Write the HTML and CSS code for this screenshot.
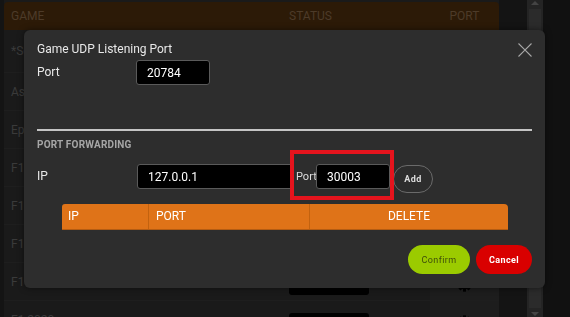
FILE: index.html
```html
<!DOCTYPE html>
<html lang="en">
<head>
  <meta charset="UTF-8">
  <title>Game Ports</title>
  <link rel="stylesheet" href="styles.css">
</head>
<body>

  <div class="app">
    <div class="games">
      <div class="games-head">
        <span class="col-name">GAME</span>
        <span class="col-status">STATUS</span>
        <span class="col-port">PORT</span>
      </div>
      <div class="game-row first"><span class="col-name">*Select</span><span class="col-status"></span><span class="col-port"></span></div>
      <div class="game-row"><span class="col-name">Asseto</span><span class="col-status"><i class="badge"></i></span><span class="col-port"><svg class="gear" viewBox="-8 -8 16 16"><g fill="#000"><circle r="5.4"/><rect x="-1.6" y="-7.6" width="3.2" height="15.2"/><rect x="-1.6" y="-7.6" width="3.2" height="15.2" transform="rotate(45)"/><rect x="-1.6" y="-7.6" width="3.2" height="15.2" transform="rotate(90)"/><rect x="-1.6" y="-7.6" width="3.2" height="15.2" transform="rotate(135)"/></g><circle r="2.2" fill="#1d1d1d"/></svg></span></div>
      <div class="game-row"><span class="col-name">Epic</span><span class="col-status"><i class="badge"></i></span><span class="col-port"><svg class="gear" viewBox="-8 -8 16 16"><g fill="#000"><circle r="5.4"/><rect x="-1.6" y="-7.6" width="3.2" height="15.2"/><rect x="-1.6" y="-7.6" width="3.2" height="15.2" transform="rotate(45)"/><rect x="-1.6" y="-7.6" width="3.2" height="15.2" transform="rotate(90)"/><rect x="-1.6" y="-7.6" width="3.2" height="15.2" transform="rotate(135)"/></g><circle r="2.2" fill="#1d1d1d"/></svg></span></div>
      <div class="game-row"><span class="col-name">F1</span><span class="col-status"><i class="badge"></i></span><span class="col-port"><svg class="gear" viewBox="-8 -8 16 16"><g fill="#000"><circle r="5.4"/><rect x="-1.6" y="-7.6" width="3.2" height="15.2"/><rect x="-1.6" y="-7.6" width="3.2" height="15.2" transform="rotate(45)"/><rect x="-1.6" y="-7.6" width="3.2" height="15.2" transform="rotate(90)"/><rect x="-1.6" y="-7.6" width="3.2" height="15.2" transform="rotate(135)"/></g><circle r="2.2" fill="#1d1d1d"/></svg></span></div>
      <div class="game-row"><span class="col-name">F1</span><span class="col-status"><i class="badge"></i></span><span class="col-port"><svg class="gear" viewBox="-8 -8 16 16"><g fill="#000"><circle r="5.4"/><rect x="-1.6" y="-7.6" width="3.2" height="15.2"/><rect x="-1.6" y="-7.6" width="3.2" height="15.2" transform="rotate(45)"/><rect x="-1.6" y="-7.6" width="3.2" height="15.2" transform="rotate(90)"/><rect x="-1.6" y="-7.6" width="3.2" height="15.2" transform="rotate(135)"/></g><circle r="2.2" fill="#1d1d1d"/></svg></span></div>
      <div class="game-row"><span class="col-name">F1</span><span class="col-status"><i class="badge"></i></span><span class="col-port"><svg class="gear" viewBox="-8 -8 16 16"><g fill="#000"><circle r="5.4"/><rect x="-1.6" y="-7.6" width="3.2" height="15.2"/><rect x="-1.6" y="-7.6" width="3.2" height="15.2" transform="rotate(45)"/><rect x="-1.6" y="-7.6" width="3.2" height="15.2" transform="rotate(90)"/><rect x="-1.6" y="-7.6" width="3.2" height="15.2" transform="rotate(135)"/></g><circle r="2.2" fill="#1d1d1d"/></svg></span></div>
      <div class="game-row"><span class="col-name">F1</span><span class="col-status"><i class="badge">Instructions</i></span><span class="col-port"><svg class="gear" viewBox="-8 -8 16 16"><g fill="#000"><circle r="5.4"/><rect x="-1.6" y="-7.6" width="3.2" height="15.2"/><rect x="-1.6" y="-7.6" width="3.2" height="15.2" transform="rotate(45)"/><rect x="-1.6" y="-7.6" width="3.2" height="15.2" transform="rotate(90)"/><rect x="-1.6" y="-7.6" width="3.2" height="15.2" transform="rotate(135)"/></g><circle r="2.2" fill="#1d1d1d"/></svg></span></div>
      <div class="game-row"><span class="col-name">F1 2020</span><span class="col-status"><i class="badge"></i></span><span class="col-port"><svg class="gear" viewBox="-8 -8 16 16"><g fill="#000"><circle r="5.4"/><rect x="-1.6" y="-7.6" width="3.2" height="15.2"/><rect x="-1.6" y="-7.6" width="3.2" height="15.2" transform="rotate(45)"/><rect x="-1.6" y="-7.6" width="3.2" height="15.2" transform="rotate(90)"/><rect x="-1.6" y="-7.6" width="3.2" height="15.2" transform="rotate(135)"/></g><circle r="2.2" fill="#1d1d1d"/></svg></span></div>
    </div>
    <div class="scrollbar">
      <span class="arrow up"></span>
      <span class="thumb"></span>
      <span class="arrow down"></span>
    </div>
    <div class="side"></div>
  </div>

  <!-- Port settings modal -->
  <div class="modal">
    <button class="close" type="button">
      <svg width="14" height="14" viewBox="0 0 14 14"><path d="M0.5 0.5L13.5 13.5M13.5 0.5L0.5 13.5" stroke="#a8a8a8" stroke-width="1.1" fill="none"/></svg>
    </button>

    <h3 class="modal-title">Game UDP Listening Port</h3>
    <div class="field-row">
      <label class="field-label">Port</label>
      <input class="field short" type="text" value="20784">
    </div>

    <hr class="divider">

    <h4 class="section-title">PORT FORWARDING</h4>
    <div class="field-row fwd">
      <label class="field-label">IP</label>
      <input class="field wide" type="text" value="127.0.0.1">
      <label class="inline-label">Port</label>
      <input class="field short" type="text" value="30003">
      <button class="add-btn" type="button">Add</button>
    </div>

    <div class="fwd-table">
      <div class="fwd-ip">IP</div>
      <div class="fwd-port">PORT</div>
      <div class="fwd-del">DELETE</div>
    </div>

    <div class="actions">
      <button class="btn confirm" type="button">Confirm</button>
      <button class="btn cancel" type="button">Cancel</button>
    </div>

    <div class="highlight"></div>
  </div>

</body>
</html>
```

FILE: styles.css
```css
body {
  margin: 0;
  background: #141414;
  font-family: Roboto, "Liberation Sans", sans-serif;
  overflow: hidden;
}

.app {
  display: flex;
  height: 317px;
  overflow: hidden;
}

.games {
  width: 495px;
  margin-left: 4px;
  background: #1a1a1a;
  overflow: hidden;
}

.games-head {
  display: flex;
  align-items: center;
  height: 28px;
  margin-top: 2px;
  background: #2c1a07;
  border-radius: 4px 4px 0 0;
  color: #4d3b29;
  font-size: 12px;
}

.col-name {
  width: 278px;
  padding-left: 7px;
  white-space: nowrap;
}

.col-status {
  width: 141px;
}

.col-port {
  width: 69px;
  display: flex;
  align-items: center;
  justify-content: center;
  align-self: stretch;
}

.game-row {
  display: flex;
  align-items: center;
  height: 37px;
  border-bottom: 1px solid #1e1e1e;
  color: #3a3a3a;
  font-size: 12px;
}

.game-row.first {
  height: 42px;
}

.game-row .col-port {
  background: #1d1d1d;
}

.badge {
  display: block;
  width: 80px;
  height: 20px;
  margin-top: 6px;
  border-radius: 3px;
  background: #000;
  color: #262626;
  font-style: normal;
  font-size: 9px;
  text-align: center;
  line-height: 12px;
}

.gear {
  width: 15px;
  height: 15px;
  margin-top: 6px;
}

.scrollbar {
  width: 16px;
  margin-left: 28px;
  background: #242424;
  display: flex;
  flex-direction: column;
  align-items: center;
  justify-content: space-between;
}

.arrow {
  width: 0;
  height: 0;
  border-left: 4px solid transparent;
  border-right: 4px solid transparent;
}

.arrow.up {
  border-bottom: 4px solid #444;
  margin-top: 1px;
}

.arrow.down {
  border-top: 4px solid #444;
  margin-bottom: 1px;
}

.thumb {
  flex: 1;
  width: 12px;
  margin: 4px 0;
  background: #2b2b2b;
}

.side {
  flex: 1;
  background: #111;
}

/* modal */

.modal {
  position: fixed;
  left: 24px;
  top: 30px;
  width: 521px;
  height: 258px;
  box-sizing: border-box;
  padding: 12px 13px 0;
  background: #2d2d2d;
  border-radius: 6px;
  box-shadow: 0 0 6px rgba(0,0,0,0.5);
  color: #e8e8e8;
}

.close {
  position: absolute;
  right: 13px;
  top: 13px;
  padding: 0;
  border: none;
  background: none;
  line-height: 0;
  cursor: pointer;
}

.modal-title {
  margin: 0;
  font-size: 12px;
  font-weight: normal;
  line-height: 14px;
}

.field-row {
  display: flex;
  align-items: center;
  margin-top: 4px;
}

.field-label {
  width: 99px;
  font-size: 12px;
  line-height: 25px;
}

.field {
  height: 25px;
  box-sizing: border-box;
  padding: 0 10px;
  background: #000;
  border: 1px solid #5a5a5a;
  border-radius: 3px;
  color: #fff;
  font-family: inherit;
  font-size: 12px;
}

.field.short {
  width: 74px;
}

.field.wide {
  width: 157px;
}

.divider {
  margin: 44px 0 0;
  height: 2px;
  border: none;
  background: #c4c4c4;
}

.section-title {
  margin: 9px 0 0;
  font-size: 10px;
  line-height: 10px;
  font-weight: bold;
  letter-spacing: 0.2px;
  color: #a6a6a6;
}

.fwd {
  align-items: flex-start;
  margin-top: 14px;
}

.fwd .field-label {
  width: 100px;
}

.inline-label {
  margin-left: 2px;
  width: 20px;
  font-size: 11px;
  line-height: 25px;
  color: #ddd;
}

.add-btn {
  margin-left: 3px;
  width: 40px;
  height: 28px;
  margin-top: 1px;
  border: 1px solid #6a6a6a;
  border-radius: 14px;
  background: transparent;
  color: #ddd;
  font-family: inherit;
  font-size: 9px;
  font-weight: bold;
  letter-spacing: 0.5px;
}

.fwd-table {
  display: flex;
  height: 26px;
  margin: 11px 0 0 25px;
  width: 446px;
  background: #df7318;
  border-radius: 3px 4px 0 0;
  border-bottom: 1px solid #b45c12;
  box-sizing: border-box;
  color: #fff;
  font-size: 12px;
  line-height: 25px;
}

.fwd-ip {
  width: 87px;
  padding-left: 6px;
  box-sizing: border-box;
  border-right: 1px solid #c2620f;
}

.fwd-port {
  width: 161px;
  padding-left: 7px;
  box-sizing: border-box;
  border-right: 1px solid #c2620f;
}

.fwd-del {
  flex: 1;
  text-align: center;
}

.actions {
  display: flex;
  justify-content: flex-end;
  gap: 6px;
  margin-top: 15px;
}

.btn {
  height: 29px;
  border: none;
  border-radius: 15px;
  font-family: inherit;
  font-size: 9px;
  letter-spacing: 0.4px;
}

.btn.confirm {
  width: 62px;
  background: #9bcb00;
  color: #3e4d0a;
}

.btn.cancel {
  width: 56px;
  background: #d90000;
  color: #fff;
  font-weight: bold;
}

/* red annotation box */
.highlight {
  position: absolute;
  left: 266px;
  top: 120px;
  width: 104px;
  height: 50px;
  box-sizing: border-box;
  border: 4px solid #e5141d;
}
```
